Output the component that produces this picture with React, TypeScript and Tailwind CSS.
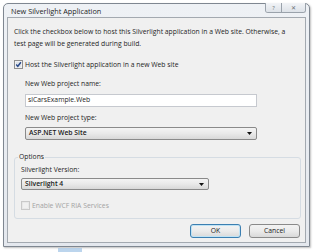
import React from 'react'

const font = { fontFamily: '"Open Sans", "Noto Sans", sans-serif' }

function Check({ checked, disabled }: { checked?: boolean; disabled?: boolean }) {
  return (
    <svg width="9" height="9" viewBox="0 0 9 9" className="shrink-0">
      <rect x="0.5" y="0.5" width="8" height="8" fill={disabled ? '#f4f4f4' : '#f6f6f6'} stroke={disabled ? '#c9c9c9' : '#8f8f8f'} />
      <rect x="1.5" y="1.5" width="6" height="6" fill={disabled ? '#f0f0f0' : '#dfe3e8'} stroke={disabled ? '#e2e2e2' : '#f4f4f4'} strokeWidth="0.6" />
      {checked && <path d="M2.2 4.6 L3.8 6.3 L6.9 2.3" fill="none" stroke="#2a4a8a" strokeWidth="1.4" />}
    </svg>
  )
}

function Combo({ label, className }: { label: string; className: string }) {
  return (
    <div
      className={`flex items-center justify-between rounded-[2px] border border-[#8a8a8a] bg-gradient-to-b from-[#f4f4f4] via-[#e9e9e9] to-[#d8d8d8] pl-[3px] pr-[4px] text-[6.8px] font-semibold text-[#1a1a1a] ${className}`}
    >
      <span>{label}</span>
      <svg width="5" height="3" viewBox="0 0 5 3">
        <path d="M0 0 H5 L2.5 3 Z" fill="#111" />
      </svg>
    </div>
  )
}

function Button({ label, focused }: { label: string; focused?: boolean }) {
  return (
    <div
      className={`flex h-[14px] w-[51px] items-center justify-center rounded-[3px] border bg-gradient-to-b from-[#f3f3f3] via-[#ebebeb] to-[#d9d9d9] text-[6.8px] text-[#1a1a1a] ${
        focused ? 'border-[#3c7fb1] shadow-[inset_0_0_0_1px_#bfe3f5]' : 'border-[#8a8a8a]'
      }`}
    >
      {label}
    </div>
  )
}

export default function App() {
  return (
    <div className="relative h-[252px] w-[313px] overflow-hidden bg-white" style={font}>
      {/* window frame */}
      <div className="ml-[3px] mt-[3px] flex h-[244px] w-[307px] flex-col rounded-t-[5px] border border-[#7f8791] bg-gradient-to-b from-[#eef1f5] to-[#e4e8ee] px-[3px] pb-[3px] shadow-[1px_1px_2px_rgba(0,0,0,0.25)]">
        {/* title bar */}
        <div className="flex h-[13px] items-start justify-between">
          <span className="pl-[4px] pt-[3px] text-[7.3px] leading-[8px] text-[#1e1e1e]">New Silverlight Application</span>
          <div className="-mt-px flex h-[10px] overflow-hidden rounded-b-[3px] border border-t-0 border-[#9aa2ab]">
            <div className="flex w-[16px] items-center justify-center border-r border-[#9aa2ab] bg-gradient-to-b from-[#f2f4f7] to-[#dde2e8] text-[6px] leading-none text-[#6b7076]">
              ?
            </div>
            <div className="flex w-[23px] items-center justify-center bg-gradient-to-b from-[#f2f4f7] to-[#dde2e8] text-[6px] leading-none text-[#6b7076]">
              ✕
            </div>
          </div>
        </div>

        {/* client */}
        <div className="flex flex-1 flex-col border border-[#a3a9b0] bg-[#f0f0f0] pl-[6px] pr-[4px] text-[6.8px] text-[#1e1e1e]">
          <p className="mt-[8px] w-[275px] leading-[12px]">
            Click the checkbox below to host this Silverlight application in a Web site. Otherwise, a test page will be
            generated during build.
          </p>

          <div className="mt-[10px] flex items-center gap-[2px]">
            <Check checked />
            <span className="leading-[9px]">Host the Silverlight application in a new Web site</span>
          </div>

          <div className="ml-[11px] flex flex-col">
            <span className="mt-[10px] leading-[9px]">New Web project name:</span>
            <div className="mt-[6px] flex h-[13px] w-[232px] items-center border border-[#c6c9cf] bg-white pl-[2px]">
              slCarsExample.Web
            </div>
            <span className="mt-[6px] leading-[9px]">New Web project type:</span>
            <Combo label="ASP.NET Web Site" className="mt-[5px] h-[13px] w-[232px]" />
          </div>

          {/* options group */}
          <div className="relative mt-[17px] flex h-[62px] w-[287px] flex-col rounded-[3px] border border-[#d5dce3] px-[6px]">
            <span className="absolute -top-[6px] left-[3px] bg-[#f0f0f0] px-[1px] leading-[9px]">Options</span>
            <span className="mt-[7px] leading-[9px]">Silverlight Version:</span>
            <Combo label="Silverlight 4" className="mt-[4px] h-[12px] w-[188px]" />
            <div className="mt-[11px] flex items-center gap-[2px] text-[#a3a3a3]">
              <Check disabled />
              <span className="leading-[9px]">Enable WCF RIA Services</span>
            </div>
          </div>

          <div className="mr-[1px] mt-[5px] flex justify-end gap-[8px]">
            <Button label="OK" focused />
            <Button label="Cancel" />
          </div>
        </div>
      </div>

      {/* bits of the desktop behind */}
      <div className="absolute left-[58px] top-[248px] h-[4px] w-[24px] bg-[#9fc3e6] opacity-70" />
    </div>
  )
}
